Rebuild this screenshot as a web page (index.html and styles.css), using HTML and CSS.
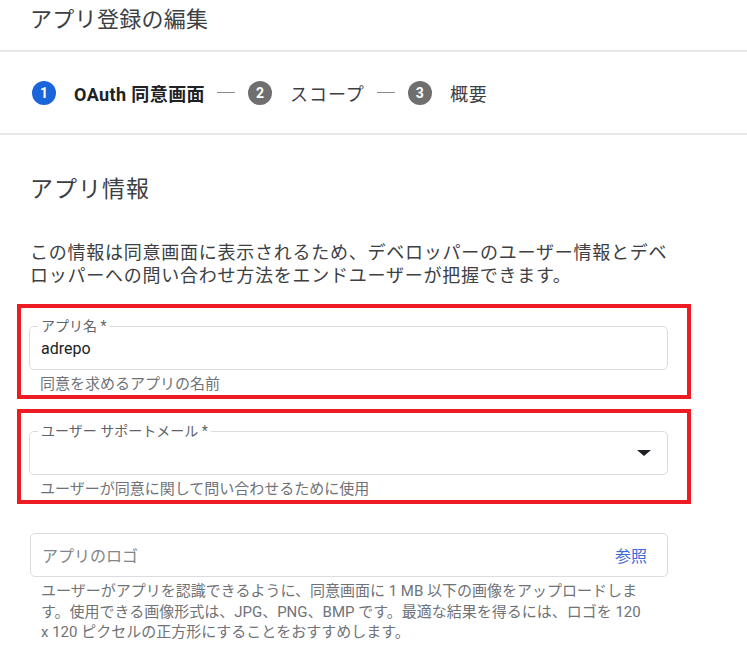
FILE: index.html
```html
<!DOCTYPE html>
<html lang="ja">
<head>
    <meta charset="UTF-8">
    <meta name="viewport" content="width=device-width, initial-scale=1.0">
    <title>アプリ登録の編集</title>
    <link rel="stylesheet" href="styles.css">
</head>
<body>
    <div class="page-header">
        <h1>アプリ登録の編集</h1>
    </div>

    <div class="stepper">
        <span class="step-num active">1</span>
        <span class="step-label active">OAuth 同意画面</span>
        <span class="step-sep"></span>
        <span class="step-num">2</span>
        <span class="step-label">スコープ</span>
        <span class="step-sep"></span>
        <span class="step-num">3</span>
        <span class="step-label">概要</span>
    </div>

    <div class="content">
        <h2>アプリ情報</h2>
        <p class="intro">この情報は同意画面に表示されるため、デベロッパーのユーザー情報とデベロッパーへの問い合わせ方法をエンドユーザーが把握できます。</p>

        <div class="highlight">
            <div class="field">
                <span class="field-label">アプリ名 *</span>
                <span class="field-value">adrepo</span>
            </div>
            <p class="hint">同意を求めるアプリの名前</p>
        </div>

        <div class="highlight">
            <div class="field">
                <span class="field-label">ユーザー サポートメール *</span>
                <span class="field-value"></span>
                <span class="caret"></span>
            </div>
            <p class="hint">ユーザーが同意に関して問い合わせるために使用</p>
        </div>

        <div class="logo-block">
            <div class="field">
                <span class="placeholder">アプリのロゴ</span>
                <span class="browse">参照</span>
            </div>
            <p class="hint long">ユーザーがアプリを認識できるように、同意画面に 1 MB 以下の画像をアップロードします。使用できる画像形式は、JPG、PNG、BMP です。最適な結果を得るには、ロゴを 120 x 120 ピクセルの正方形にすることをおすすめします。</p>
        </div>
    </div>
</body>
</html>
```

FILE: styles.css
```css
body {
    margin: 0;
    font-family: Roboto, "Noto Sans CJK JP", sans-serif;
    color: #3c4043;
    background: #fff;
}
.page-header {
    height: 50px;
    border-bottom: 2px solid #e8e8e8;
    padding-left: 30px;
}
.page-header h1 {
    margin: 0;
    padding-top: 4px;
    font-size: 22px;
    font-weight: 400;
    line-height: 32px;
    letter-spacing: 0.3px;
}
.stepper {
    display: flex;
    align-items: center;
    height: 81px;
    padding-left: 32px;
    border-bottom: 2px solid #e8e8e8;
}
.step-num {
    width: 24px;
    height: 24px;
    border-radius: 50%;
    background: #6f6f6f;
    color: #fff;
    font-size: 14px;
    font-weight: 700;
    display: flex;
    align-items: center;
    justify-content: center;
}
.step-num.active {
    background: #1a65d9;
}
.step-label {
    margin-left: 18px;
    font-size: 18px;
    letter-spacing: 1px;
}
.step-label.active {
    font-weight: 700;
    color: #202124;
    letter-spacing: 0.4px;
}
.step-sep {
    width: 18px;
    height: 1px;
    background: #8a8a8a;
    margin: 0 13px 0 12px;
}
.content {
    width: 638px;
    padding: 39px 0 0 30px;
}
.content h2 {
    margin: 0;
    font-size: 23px;
    font-weight: 400;
    line-height: 32px;
    letter-spacing: 1px;
}
.intro {
    margin: 35px 0 0;
    font-size: 18px;
    line-height: 23px;
    letter-spacing: 0.75px;
}
.highlight {
    border: 4px solid #ed1c24;
    margin: 17px -23px 0 -13px;
    padding: 18px 19px 2px 8px;
}
.highlight + .highlight {
    margin-top: 10px;
}
.field {
    position: relative;
    height: 42px;
    border: 1px solid #dadce0;
    border-radius: 5px;
    display: flex;
    align-items: center;
    padding: 0 16px 0 11px;
}
.field-label {
    position: absolute;
    left: 8px;
    top: -9px;
    padding: 0 3px;
    background: #fff;
    font-size: 14px;
    line-height: 16px;
    color: #5f6368;
}
.field-value {
    flex: 1;
    font-size: 16px;
    color: #202124;
}
.caret {
    width: 0;
    height: 0;
    border-left: 7px solid transparent;
    border-right: 7px solid transparent;
    border-top: 6px solid #202124;
}
.hint {
    margin: 5px 0 0 11px;
    font-size: 15px;
    line-height: 18px;
    color: #6f7377;
}
.logo-block {
    margin-top: 29px;
}
.placeholder {
    flex: 1;
    font-size: 16px;
    color: #80868b;
}
.browse {
    font-size: 16px;
    color: #3d6ad6;
    margin-right: 4px;
}
.hint.long {
    margin: 4px 20px 0 11px;
    line-height: 20.5px;
}
```
